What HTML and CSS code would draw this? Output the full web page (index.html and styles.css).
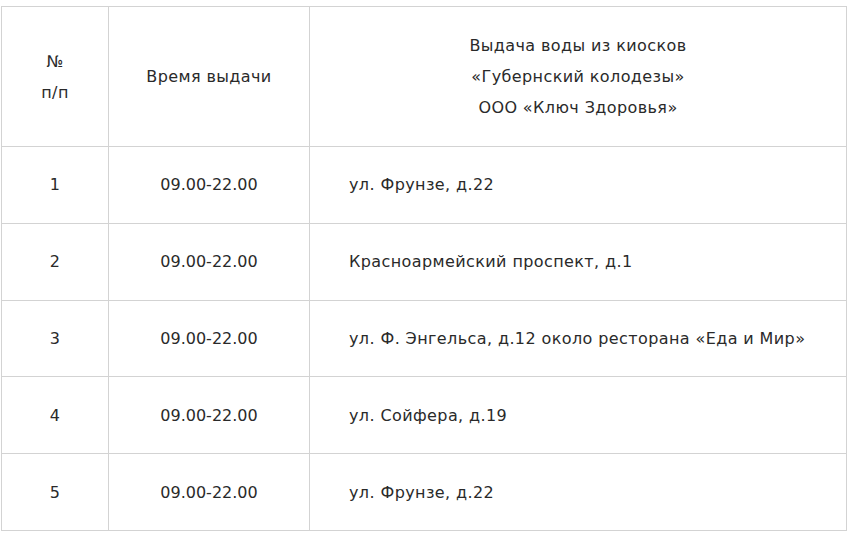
FILE: index.html
```html
<!DOCTYPE html>
<html lang="ru">
<head>
<meta charset="utf-8">
<link rel="stylesheet" href="styles.css">
</head>
<body>
<table class="kiosks">
  <colgroup>
    <col class="c-num">
    <col class="c-time">
    <col class="c-addr">
  </colgroup>
  <thead>
    <tr class="head">
      <th>№<br>п/п</th>
      <th>Время выдачи</th>
      <th>Выдача воды из киосков<br>«Губернский колодезы»<br>ООО «Ключ Здоровья»</th>
    </tr>
  </thead>
  <tbody>
    <tr><td>1</td><td class="time">09.00-22.00</td><td class="addr">ул. Фрунзе, д.22</td></tr>
    <tr><td>2</td><td class="time">09.00-22.00</td><td class="addr">Красноармейский проспект, д.1</td></tr>
    <tr><td>3</td><td class="time">09.00-22.00</td><td class="addr">ул. Ф. Энгельса, д.12 около ресторана «Еда и Мир»</td></tr>
    <tr><td>4</td><td class="time">09.00-22.00</td><td class="addr">ул. Сойфера, д.19</td></tr>
    <tr><td>5</td><td class="time">09.00-22.00</td><td class="addr">ул. Фрунзе, д.22</td></tr>
  </tbody>
</table>
</body>
</html>
```

FILE: styles.css
```css
html, body {
  margin: 0;
  background: #fff;
}
body {
  padding: 6px 0 0 1px;
  font-family: "DejaVu Sans", "Liberation Sans", sans-serif;
  font-size: 16px;
  letter-spacing: 0.4px;
  color: #2a2a2a;
}
.kiosks {
  border-collapse: collapse;
  table-layout: fixed;
  width: 845px;
}
.c-num { width: 107px; }
.c-time { width: 201px; }
.c-addr { width: 537px; }
.kiosks th,
.kiosks td {
  border: 1px solid #d3d3d3;
  padding: 0;
  text-align: center;
  vertical-align: middle;
  font-weight: normal;
  line-height: 31px;
}
.head th {
  height: 139px;
}
.kiosks tbody td {
  height: 75.8px;
}
.kiosks td.time {
  letter-spacing: 0;
}
.kiosks td.addr {
  text-align: left;
  padding-left: 39px;
}
```
